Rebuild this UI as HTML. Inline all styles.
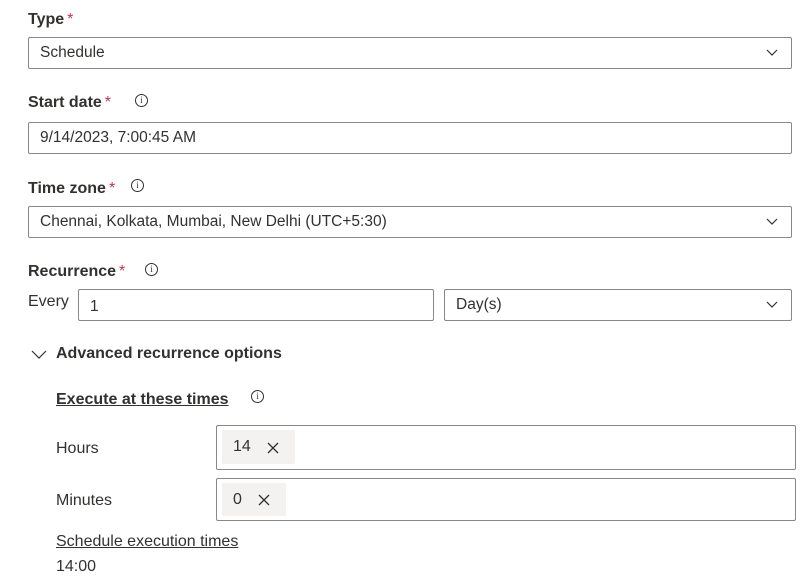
<!DOCTYPE html>
<html><head><style>
body{margin:0;width:808px;height:580px;background:#fff;font-family:"Liberation Sans",sans-serif;color:#323130;position:relative;overflow:hidden}
.a{position:absolute;white-space:nowrap}
.lbl{font-size:16px;font-weight:600;color:#323130}
.lbl b{color:#c4314b;font-weight:400;margin-left:3px}
.box{position:absolute;border:1px solid #8a8886;border-radius:2px;box-sizing:border-box;background:#fff;font-size:15.5px;line-height:29px;padding-left:11px}
.chev{position:absolute;right:13px;top:11px}
.info{position:absolute;width:11px;height:11px;border:1px solid #323130;border-radius:50%;font-size:9px;line-height:11px;text-align:center;font-family:"Liberation Serif",serif}
.chip{position:absolute;background:#f3f2f1;border-radius:2px;font-size:16px;line-height:34px;padding-left:11px}
.t{font-size:16px}
</style></head><body>
<div class="a lbl" style="left:28px;top:11px">Type<b>*</b></div>
<div class="box" style="left:28px;top:37px;width:764px;height:32px">Schedule<svg class="chev" width="12" height="8"><path d="M1 1l5 5 5-5" stroke="#323130" fill="none" stroke-width="1.2"/></svg></div>
<div class="a lbl" style="left:28px;top:94px">Start date<b>*</b></div>
<div class="info" style="left:135px;top:94px">i</div>
<div class="box" style="left:28px;top:122px;width:764px;height:32px">9/14/2023, 7:00:45 AM</div>
<div class="a lbl" style="left:28px;top:180px">Time zone<b>*</b></div>
<div class="info" style="left:131px;top:179px">i</div>
<div class="box" style="left:28px;top:206px;width:764px;height:32px">Chennai, Kolkata, Mumbai, New Delhi (UTC+5:30)<svg class="chev" width="12" height="8"><path d="M1 1l5 5 5-5" stroke="#323130" fill="none" stroke-width="1.2"/></svg></div>
<div class="a lbl" style="left:28px;top:263px">Recurrence<b>*</b></div>
<div class="info" style="left:145px;top:263px">i</div>
<div class="a t" style="left:28px;top:293px">Every</div>
<div class="box" style="left:78px;top:289px;width:356px;height:32px;line-height:33px">1</div>
<div class="box" style="left:444px;top:289px;width:348px;height:32px">Day(s)<svg class="chev" width="12" height="8"><path d="M1 1l5 5 5-5" stroke="#323130" fill="none" stroke-width="1.2"/></svg></div>
<svg class="a" style="left:31px;top:350px" width="16" height="10"><path d="M1 1l7 7 7-7" stroke="#323130" fill="none" stroke-width="1.2"/></svg>
<div class="a t" style="left:56px;top:345px;font-weight:600">Advanced recurrence options</div>
<div class="a t" style="left:56px;top:391px;font-weight:600;text-decoration:underline">Execute at these times</div>
<div class="info" style="left:251px;top:390px">i</div>
<div class="a t" style="left:56px;top:440px">Hours</div>
<div class="box" style="left:216px;top:425px;width:580px;height:45px"></div>
<div class="chip" style="left:222px;top:430px;width:62px">14<svg style="position:absolute;left:45px;top:12px" width="12" height="12"><path d="M1 1l10 10M11 1L1 11" stroke="#323130" stroke-width="1.3"/></svg></div>
<div class="a t" style="left:56px;top:492px">Minutes</div>
<div class="box" style="left:216px;top:478px;width:580px;height:43px"></div>
<div class="chip" style="left:222px;top:483px;width:53px;line-height:33px">0<svg style="position:absolute;left:36px;top:11px" width="12" height="12"><path d="M1 1l10 10M11 1L1 11" stroke="#323130" stroke-width="1.3"/></svg></div>
<div class="a t" style="left:56px;top:533px;text-decoration:underline">Schedule execution times</div>
<div class="a t" style="left:56px;top:558px">14:00</div>
</body></html>
